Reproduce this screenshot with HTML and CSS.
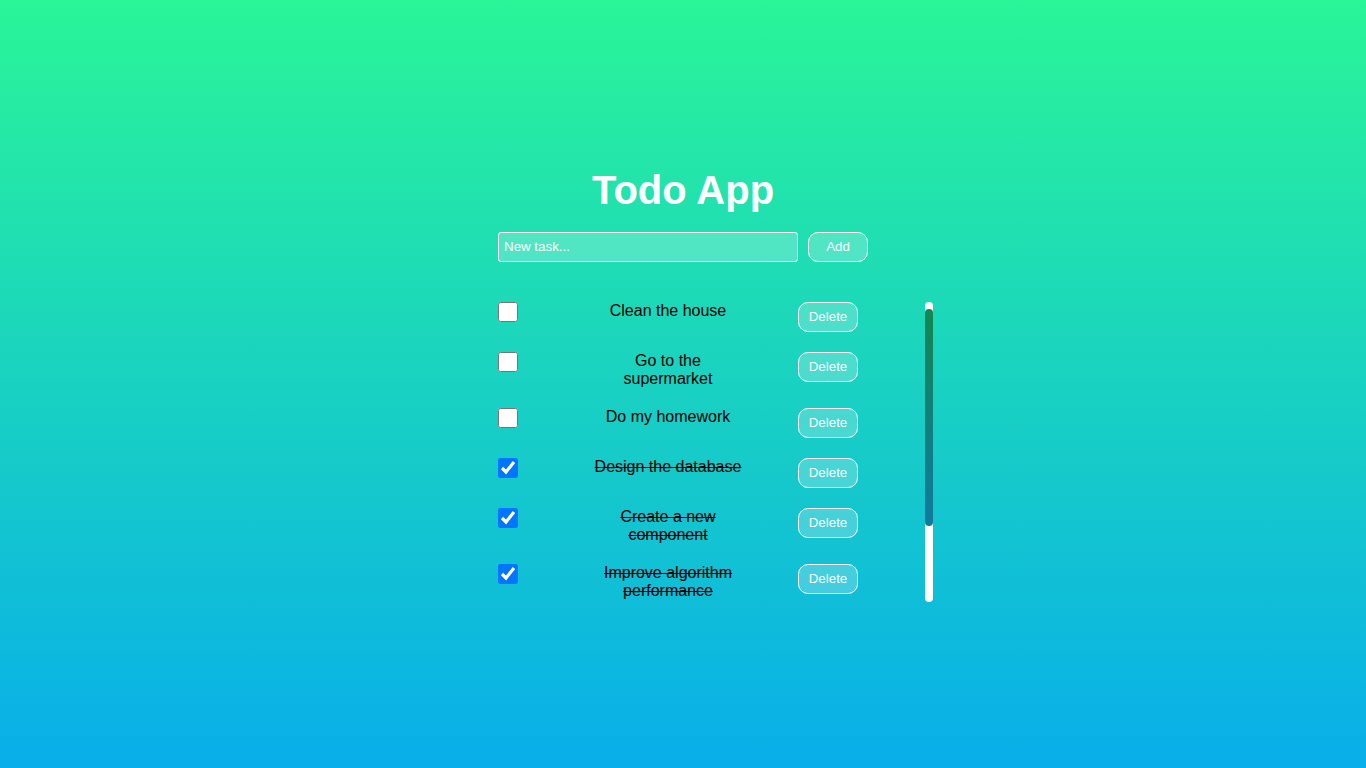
FILE: index.html
```html
<!DOCTYPE html>
<html lang="en">
<head>
<meta charset="utf-8">
<title>Todo App</title>
<link rel="stylesheet" href="styles.css">
</head>
<body>
<main class="app">
  <h1 class="title">Todo App</h1>
  <form class="add-form">
    <input class="task-input" type="text" placeholder="New task...">
    <button class="btn add-btn" type="button">Add</button>
  </form>
  <div class="list-wrap">
    <ul class="todo-list">
      <li class="todo"><input class="check" type="checkbox"><span class="todo-text"><span class="label">Clean the house</span></span><button class="btn del-btn" type="button">Delete</button></li>
      <li class="todo"><input class="check" type="checkbox"><span class="todo-text"><span class="label">Go to the supermarket</span></span><button class="btn del-btn" type="button">Delete</button></li>
      <li class="todo"><input class="check" type="checkbox"><span class="todo-text"><span class="label">Do my homework</span></span><button class="btn del-btn" type="button">Delete</button></li>
      <li class="todo done"><input class="check" type="checkbox" checked><span class="todo-text"><span class="label">Design the database</span></span><button class="btn del-btn" type="button">Delete</button></li>
      <li class="todo done"><input class="check" type="checkbox" checked><span class="todo-text"><span class="label">Create a new component</span></span><button class="btn del-btn" type="button">Delete</button></li>
      <li class="todo done"><input class="check" type="checkbox" checked><span class="todo-text"><span class="label">Improve algorithm performance</span></span><button class="btn del-btn" type="button">Delete</button></li>
    </ul>
    <div class="scrollbar" aria-hidden="true"><div class="scroll-thumb"></div></div>
  </div>
</main>
</body>
</html>
```
FILE: styles.css
```css
html, body {
  margin: 0;
  padding: 0;
}
body {
  height: 100vh;
  background: linear-gradient(to bottom, #2af598 0%, #08aeea 100%);
  font-family: "Liberation Sans", Arial, sans-serif;
  display: flex;
  justify-content: center;
  align-items: center;
}
.app {
  width: 370px;
}
.title {
  margin: 0 0 19px;
  text-align: center;
  color: #fff;
  font-size: 40px;
  font-weight: bold;
  line-height: 46px;
}
.add-form {
  display: flex;
  gap: 10px;
  margin: 0 0 40px;
}
.task-input {
  box-sizing: border-box;
  width: 300px;
  height: 30px;
  padding: 0 5px;
  border: 1px solid #fff;
  border-radius: 3px;
  background: rgba(255, 255, 255, 0.22);
  color: #fff;
  font-family: "Liberation Sans", Arial, sans-serif;
  font-size: 13.33px;
  outline: none;
}
.task-input::placeholder {
  color: #fff;
  opacity: 1;
}
.btn {
  box-sizing: border-box;
  width: 60px;
  height: 30px;
  padding: 0;
  border: 1px solid #fff;
  border-radius: 10px;
  background: rgba(255, 255, 255, 0.22);
  color: #fff;
  font-family: "Liberation Sans", Arial, sans-serif;
  font-size: 13.33px;
  cursor: pointer;
}
.list-wrap {
  width: 435px;
  height: 300px;
  display: flex;
  justify-content: space-between;
  overflow: hidden;
}
.scrollbar {
  width: 8px;
  height: 300px;
  flex: none;
  background: #fff;
  border-radius: 4px;
  padding-top: 7px;
  box-sizing: border-box;
}
.scroll-thumb {
  height: 217px;
  border-radius: 4px;
  background: linear-gradient(to bottom, #138752 0%, #0f7aa0 100%);
}
.todo-list {
  list-style: none;
  margin: 0;
  padding: 0;
  display: flex;
  flex-direction: column;
  gap: 20px;
}
.todo {
  width: 360px;
  display: grid;
  grid-template-columns: 20px 1fr 60px;
  align-items: start;
}
.check {
  width: 20px;
  height: 20px;
  margin: 0;
}
.todo-text {
  padding-left: 20px;
  display: flex;
  justify-content: center;
}
.label {
  width: 150px;
  text-align: center;
  font-size: 16px;
  line-height: 18px;
  color: #000;
}
.done .label {
  text-decoration: line-through;
}
```
